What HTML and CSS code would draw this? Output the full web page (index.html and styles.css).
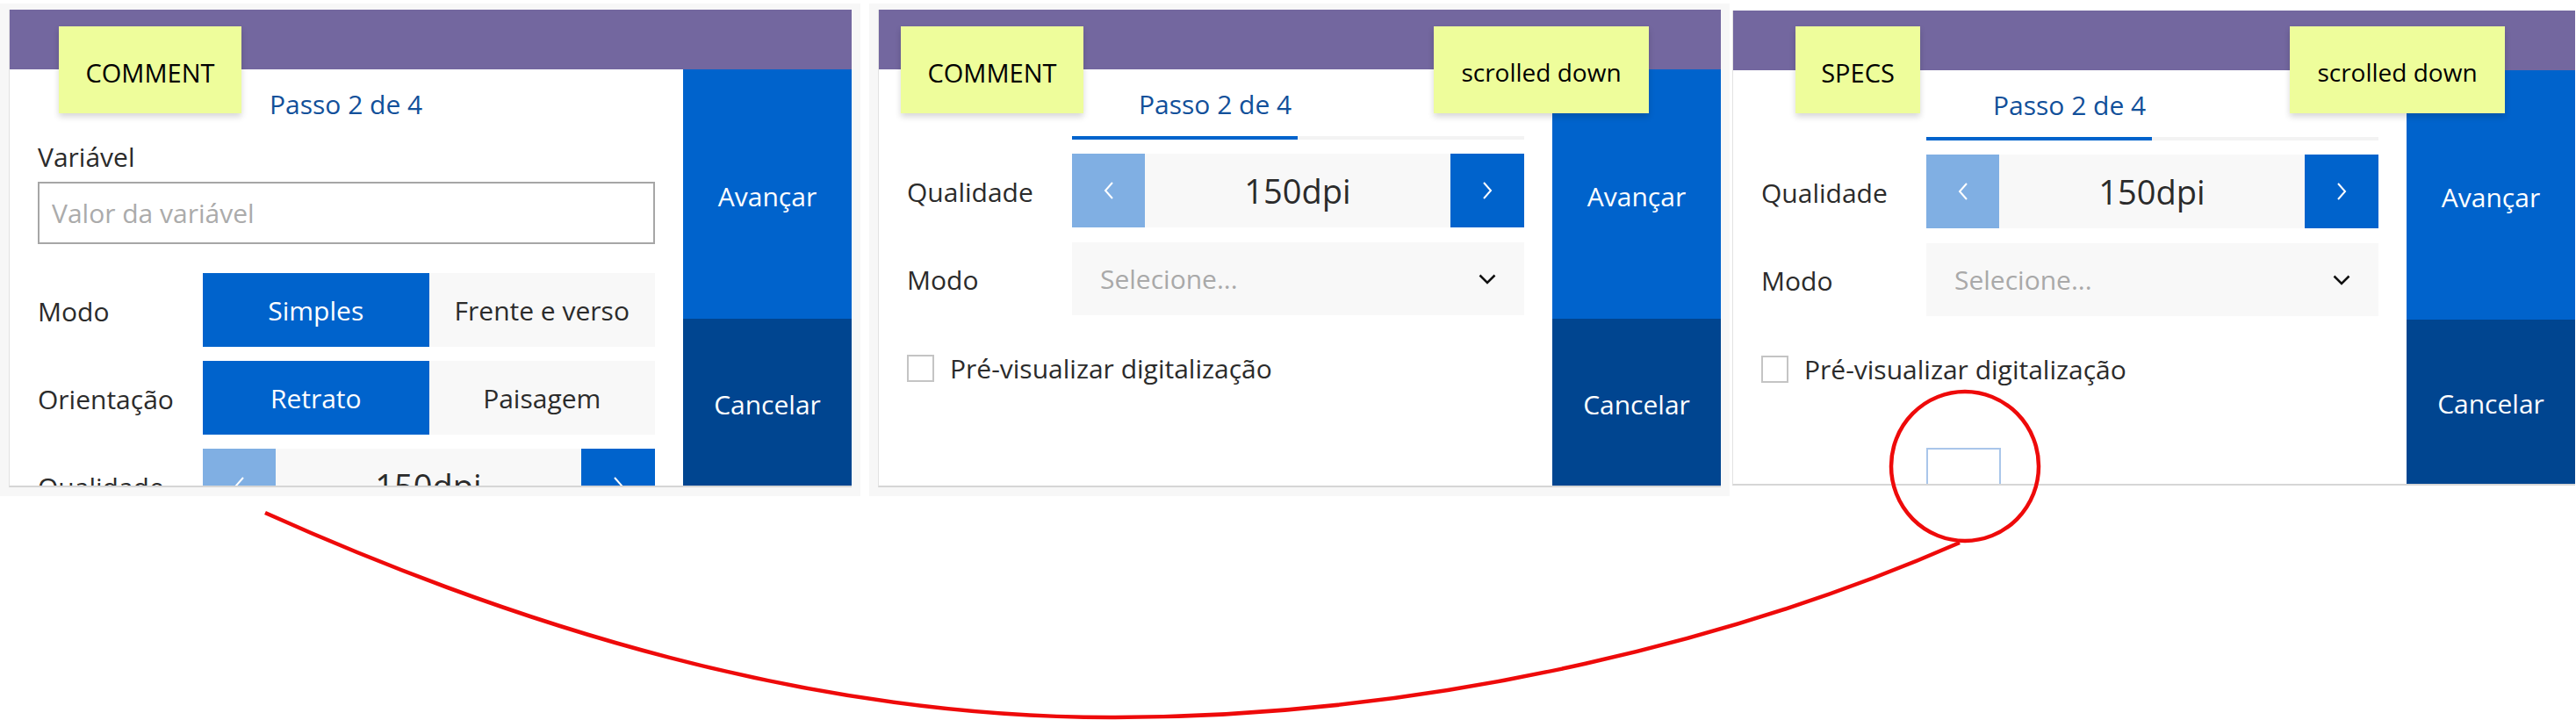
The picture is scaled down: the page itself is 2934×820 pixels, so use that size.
FILE: index.html
```html
<!DOCTYPE html>
<html lang="pt">
<head>
  <meta charset="UTF-8">
  <meta name="viewport" content="width=device-width, initial-scale=1.0">
  <title>Passo 2 de 4</title>
  <link rel="stylesheet" href="styles.css">
</head>
<body>
  <div class="board">

    <!-- tela 1: topo do formulario -->
    <div class="frame">
      <div class="screen">
        <div class="appbar"></div>
        <div class="content">
          <div class="main">
            <div class="step">Passo 2 de 4</div>
            <div class="field-label">Variável</div>
            <input class="text-input" type="text" placeholder="Valor da variável">
            <div class="row row-first">
              <div class="label">Modo</div>
              <div class="toggle">
                <div class="opt on">Simples</div>
                <div class="opt">Frente e verso</div>
              </div>
            </div>
            <div class="row">
              <div class="label">Orientação</div>
              <div class="toggle">
                <div class="opt on">Retrato</div>
                <div class="opt">Paisagem</div>
              </div>
            </div>
            <div class="row">
              <div class="label">Qualidade</div>
              <div class="stepper">
                <div class="step-btn prev">
                  <svg width="12" height="20" viewBox="0 0 12 20"><polyline points="10,1 2,10 10,19" /></svg>
                </div>
                <div class="value">150dpi</div>
                <div class="step-btn next">
                  <svg width="12" height="20" viewBox="0 0 12 20"><polyline points="2,1 10,10 2,19" /></svg>
                </div>
              </div>
            </div>
          </div>
          <div class="side">
            <div class="action go">Avançar</div>
            <div class="action cancel">Cancelar</div>
          </div>
        </div>
        <div class="note note-a">COMMENT</div>
      </div>
    </div>

    <!-- tela 2: rolada para baixo -->
    <div class="frame frame-2">
      <div class="screen">
        <div class="appbar"></div>
        <div class="content">
          <div class="main">
            <div class="tabs">
              <div class="tab-title">Passo 2 de 4</div>
              <div class="tabbar"><div class="tabbar-fill"></div></div>
            </div>
            <div class="row row-tight">
              <div class="label">Qualidade</div>
              <div class="stepper">
                <div class="step-btn prev">
                  <svg width="12" height="20" viewBox="0 0 12 20"><polyline points="10,1 2,10 10,19" /></svg>
                </div>
                <div class="value">150dpi</div>
                <div class="step-btn next">
                  <svg width="12" height="20" viewBox="0 0 12 20"><polyline points="2,1 10,10 2,19" /></svg>
                </div>
              </div>
            </div>
            <div class="row row-select">
              <div class="label">Modo</div>
              <div class="select">
                <span class="placeholder">Selecione...</span>
                <svg width="20" height="12" viewBox="0 0 20 12"><polyline points="1.5,1.5 10,10 18.5,1.5" /></svg>
              </div>
            </div>
            <label class="check">
              <span class="box"></span>
              <span>Pré-visualizar digitalização</span>
            </label>
          </div>
          <div class="side">
            <div class="action go">Avançar</div>
            <div class="action cancel">Cancelar</div>
          </div>
        </div>
        <div class="note note-b">COMMENT</div>
        <div class="note note-scroll">scrolled down</div>
      </div>
    </div>

    <!-- tela 3: specs -->
    <div class="screen screen-3">
      <div class="appbar"></div>
      <div class="content">
        <div class="main">
          <div class="tabs">
            <div class="tab-title">Passo 2 de 4</div>
            <div class="tabbar"><div class="tabbar-fill"></div></div>
          </div>
          <div class="row row-tight">
            <div class="label">Qualidade</div>
            <div class="stepper">
              <div class="step-btn prev">
                <svg width="12" height="20" viewBox="0 0 12 20"><polyline points="10,1 2,10 10,19" /></svg>
              </div>
              <div class="value">150dpi</div>
              <div class="step-btn next">
                <svg width="12" height="20" viewBox="0 0 12 20"><polyline points="2,1 10,10 2,19" /></svg>
              </div>
            </div>
          </div>
          <div class="row row-select">
            <div class="label">Modo</div>
            <div class="select">
              <span class="placeholder">Selecione...</span>
              <svg width="20" height="12" viewBox="0 0 20 12"><polyline points="1.5,1.5 10,10 18.5,1.5" /></svg>
            </div>
          </div>
          <label class="check">
            <span class="box"></span>
            <span>Pré-visualizar digitalização</span>
          </label>
          <div class="focus-box"></div>
        </div>
        <div class="side">
          <div class="action go">Avançar</div>
          <div class="action cancel">Cancelar</div>
        </div>
      </div>
      <div class="note note-specs">SPECS</div>
      <div class="note note-scroll">scrolled down</div>
    </div>

  </div>

  <!-- marcacao vermelha por cima -->
  <svg class="markup" width="2934" height="820" viewBox="0 0 2934 820">
    <path d="M302 584 C560 700 900 817 1265 817 C1650 817 2000 720 2232 618" />
    <ellipse cx="2238" cy="531" rx="84" ry="85" />
  </svg>
</body>
</html>
```

FILE: styles.css
```css
body {
  margin: 0;
  background: #fff;
  font-family: "Open Sans", "Noto Sans", sans-serif;
  font-size: 30px;
  color: #2b2b2b;
  overflow: hidden;
}

.board {
  display: flex;
  align-items: flex-start;
}

.frame {
  margin-top: 4px;
  padding: 7px 10px 10px;
  background: #f7f7f7;
}
.frame-2 {
  margin-left: 10px;
}

.screen {
  position: relative;
  width: 960px;
  height: 544px;
  box-sizing: border-box;
  background: #fff;
  border-left: 1px solid #e2e2e2;
  border-bottom: 2px solid #d6d6d6;
  overflow: hidden;
  display: flex;
  flex-direction: column;
}
.screen-3 {
  margin-left: 3px;
  margin-top: 12px;
  height: 541px;
}

.appbar {
  height: 68px;
  flex: none;
  background: #73679f;
}

.content {
  flex: 1;
  display: flex;
  min-height: 0;
}

.main {
  flex: 1;
  padding: 0 32px 0 32px;
  overflow: hidden;
}

.side {
  width: 192px;
  display: flex;
  flex-direction: column;
}
.action {
  display: flex;
  align-items: center;
  justify-content: center;
  padding-top: 4px;
  box-sizing: border-box;
  color: #fff;
}
.go {
  height: 284px;
  background: #0063cc;
}
.cancel {
  flex: 1;
  background: #004590;
}

/* passo */
.step {
  padding: 20px 0 0 264px;
  line-height: 40px;
  color: #12509a;
}
.tabs {
  margin-left: 188px;
  padding-top: 20px;
}
.tab-title {
  padding-left: 76px;
  line-height: 40px;
  color: #12509a;
}
.tabbar {
  margin-top: 16px;
  height: 4px;
  background: #f3f3f3;
}
.tabbar-fill {
  width: 257px;
  height: 4px;
  background: #0063cc;
}

.field-label {
  margin-top: 20px;
  line-height: 40px;
}
.text-input {
  display: block;
  margin-top: 8px;
  width: 703px;
  height: 71px;
  box-sizing: border-box;
  padding: 0 14px;
  border: 2px solid #a6a6a6;
  font-family: inherit;
  font-size: 30px;
  color: #2b2b2b;
  outline: none;
}
.text-input::placeholder {
  color: #ababab;
}

.row {
  display: flex;
  align-items: center;
  margin-top: 16px;
  height: 84px;
}
.row-first {
  margin-top: 33px;
}
.row-tight {
  margin-top: 16px;
}
.row-select {
  margin-top: 17px;
  height: 83px;
}
.label {
  width: 188px;
  flex: none;
  padding-top: 2px;
}

.toggle {
  flex: 1;
  height: 100%;
  display: flex;
}
.opt {
  flex: 1;
  display: flex;
  align-items: center;
  justify-content: center;
  background: #f8f8f8;
}
.opt.on {
  background: #0063cc;
  color: #fff;
}

.stepper {
  flex: 1;
  height: 100%;
  display: flex;
  background: #f8f8f8;
}
.step-btn {
  width: 84px;
  display: flex;
  align-items: center;
  justify-content: center;
}
.step-btn.prev {
  width: 83px;
  background: #80afe3;
}
.step-btn.next {
  background: #0063cc;
}
.step-btn polyline {
  fill: none;
  stroke: #fff;
  stroke-width: 2;
}
.value {
  flex: 1;
  display: flex;
  align-items: center;
  justify-content: center;
  font-size: 38px;
  color: #2b2b2b;
}

.select {
  flex: 1;
  height: 100%;
  display: flex;
  align-items: center;
  justify-content: space-between;
  padding: 0 32px;
  background: #f8f8f8;
}
.placeholder {
  color: #a9a9a9;
}
.select polyline {
  fill: none;
  stroke: #111;
  stroke-width: 2.5;
}

.check {
  display: flex;
  align-items: center;
  margin-top: 45px;
  height: 31px;
}
.box {
  width: 31px;
  height: 31px;
  box-sizing: border-box;
  border: 2px solid #c4c4c4;
  margin-right: 18px;
}

.focus-box {
  margin: 74px 0 0 188px;
  width: 85px;
  height: 60px;
  box-sizing: border-box;
  border: 2px solid #a9c6ea;
}

/* post-its */
.note {
  position: absolute;
  top: 19px;
  height: 99px;
  display: flex;
  align-items: center;
  justify-content: center;
  padding-top: 5px;
  box-sizing: border-box;
  background: #eefd9b;
  box-shadow: 0 4px 7px rgba(0, 0, 0, 0.16);
  color: #000;
  font-size: 29px;
}
.note-a {
  left: 56px;
  width: 208px;
}
.note-b {
  left: 25px;
  width: 208px;
}
.note-specs {
  top: 18px;
  left: 71px;
  width: 142px;
}
.note-scroll {
  left: 632px;
  width: 245px;
  font-size: 28px;
}
.screen-3 .note-scroll {
  top: 18px;
  left: 634px;
}

.markup {
  position: absolute;
  left: 0;
  top: 0;
  pointer-events: none;
}
.markup path,
.markup ellipse {
  fill: none;
  stroke: #ee0a0a;
  stroke-width: 4.5;
}
```
